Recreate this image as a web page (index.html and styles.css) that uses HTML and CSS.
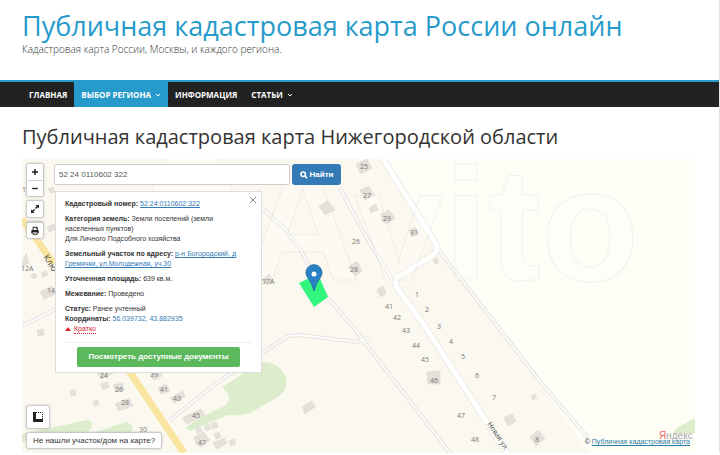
FILE: index.html
```html
<!DOCTYPE html>
<html lang="ru">
<head>
<meta charset="utf-8">
<meta name="viewport" content="width=device-width, initial-scale=1">
<title>Публичная кадастровая карта России онлайн</title>
<link rel="stylesheet" href="styles.css">
</head>
<body>
<header class="site-header">
  <h1 class="site-title"><a href="#">Публичная кадастровая карта России онлайн</a></h1>
  <p class="site-tagline">Кадастровая карта России, Москвы, и каждого региона.</p>
</header>
<nav class="main-nav">
  <a class="nav-link" href="#">ГЛАВНАЯ</a>
  <a class="nav-link nav-link-active" href="#">ВЫБОР РЕГИОНА
    <svg class="chevron" viewBox="0 0 6 4" aria-hidden="true"><path d="M1 1l2 2 2-2"/></svg></a>
  <a class="nav-link" href="#">ИНФОРМАЦИЯ</a>
  <a class="nav-link" href="#">СТАТЬИ
    <svg class="chevron" viewBox="0 0 6 4" aria-hidden="true"><path d="M1 1l2 2 2-2"/></svg></a>
</nav>
<main class="content">
  <h2 class="page-title">Публичная кадастровая карта Нижегородской области</h2>
  <section class="map">
    <svg class="map-canvas" viewBox="22 159 673 294" preserveAspectRatio="xMinYMin slice" aria-label="Карта">
      <rect class="field" x="22" y="159" width="2000" height="1000"/>
      <path class="land" d="M22 159H384L440 252 482 306 538 383 590 453H22z"/>
      <g class="green">
        <path d="M222 387L262 362Q280 362 286 378Q289 391 276 398L250 413Q240 416 228 415L190 431 185 428 200 418 226 405Q232 397 226 391z"/>
        <path d="M22 434L88 420Q96 423 88 432L22 442z"/>
        <path d="M90 434L126 422Q138 426 128 436L118 442H90z"/>
        <path d="M680 426L695 418V433H672z"/>
      </g>
      <g class="yellow-road">
        <path d="M22 219L54 264M127 368L184 453"/>
      </g>
      <g class="lane-edge">
        <path d="M22 326L56 309M262 208L284 228 302 252 318 286 352 326 450 453M262 353L288 336 300 335 358 342 370 337M262 353L218 382 170 420"/>
        <path d="M340 188L365 235 392 279"/>
        <path d="M440 252L482 306 538 379 588 438"/>
      </g>
      <g class="lane-fill">
        <path d="M22 326L56 309M262 208L284 228 302 252 318 286 352 326 450 453M262 353L288 336 300 335 358 342 370 337M262 353L218 382 170 420"/>
        <path d="M340 188L365 235 392 279"/>
        <path d="M440 252L482 306 538 379 588 438"/>
      </g>
      <path class="street-edge" d="M382 157L436 244Q440 251 430 257L398 277Q393 281 398 289L424 325 508 455"/>
      <path class="street" d="M382 157L436 244Q440 251 430 257L398 277Q393 281 398 289L424 325 508 455"/>
      <g class="watermark" aria-hidden="true">
        <circle cx="192" cy="190" r="40"/><circle cx="206" cy="260" r="27"/>
        <text x="245" y="280">Avito</text>
      </g>
      <g class="house">
        <path d="M356 164l11-5 5 9-11 6zM360 190l9-4 5 9-9 5zM369 208l7-4 2 6-7 3zM381 214l8-4 6 8-8 6-5-3zM409 231l6-4 4 6-7 4zM319 206l9-5 7 9-10 5zM348 267l9-6 5 10-7 5zM377 290l6-4 3 8-5 3z"/>
        <path d="M427 372l13-1v13h-12zM504 418l8-4 4 7-8 5zM530 437l8-7 7 8-9 8zM302 407l10-6 3 6-10 7z"/>
        <path d="M97 373l14-6 3 6-13 6zM101 384l6-2 2 5-6 3zM113 385l9-2 2 7-8 2zM115 404l14-6 4 8-14 5zM150 375l9-5 3 6-8 4zM158 388l8-4 4 7-9 3zM170 398l13-7 2 6-11 6zM182 418l19-9 4 6-18 9zM194 437l9-5 7 8-9 7-5-3zM213 443l11-5 3 5-10 6zM195 428l5-2 2 5-5 2zM204 426l5-2 2 5-5 2zM211 424l5-2 2 5-5 2zM214 434l5-2 2 5-5 2zM229 441l5-2 2 5-5 2zM37 330l6-1 1 6-6 1zM70 391l5-1 1 5-5 1zM93 401l5-1 1 5-5 1z"/>
        <path d="M48 189l5-2 2 5-5 1zM47 227l7-3 2 5-7 3zM40 292l12-6 4 8-12 5zM31 275l4-2 2 4-4 2zM41 273l5-2 2 4-5 2zM22 263l4-10 3 10-7 4zM27 166l6-2 3 5-7 3zM262 280l7-6 4 7-5 4zM433 260l4-2 2 4-4 2zM531 396l4-2 2 4-4 2z"/>
      </g>
      <g class="map-label">
        <text x="360" y="169">25</text><text x="363" y="198">27</text><text x="383" y="221">29</text><text x="410" y="235">31</text>
        <text x="352" y="244">26</text><text x="350" y="272">28</text><text x="262" y="284">37А</text><text x="415" y="297">1</text>
        <text x="385" y="309">41</text><text x="393" y="320">42</text><text x="402" y="333">43</text><text x="412" y="348">44</text>
        <text x="421" y="362">45</text><text x="430" y="383">46</text><text x="457" y="418">47</text><text x="471" y="442">48</text>
        <text x="425" y="312">2</text><text x="437" y="329">3</text><text x="449" y="344">4</text><text x="461" y="359">5</text>
        <text x="475" y="378">6</text><text x="492" y="400">7</text><text x="535" y="442">8</text>
        <text x="100" y="378">24</text><text x="115" y="392">26</text><text x="121" y="405">28</text><text x="139" y="432">30</text>
        <text x="150" y="377">39</text><text x="160" y="392">41</text><text x="173" y="401">43</text><text x="192" y="418">45</text><text x="198" y="445">47</text>
        <text x="21" y="271">12А</text><text x="47" y="293">14</text><text x="22" y="192">15</text>
      </g>
      <text class="street-name" transform="translate(487 424) rotate(56)">Новая ул.</text>
      <text class="street-name street-name-main" transform="translate(43 257) rotate(57)">Ключевая</text>
      <path class="parcel" d="M299 283L318 274 328 297 314 307z"/>
      <path class="pin" d="M314 291Q312 283 308 278A8 8 0 1 1 320 278Q316 283 314 291z"/>
      <circle class="pin-hole" cx="314" cy="274" r="2.5"/>
      <text class="yandex" x="659" y="439"><tspan class="yandex-first">Я</tspan>ндекс</text>
    </svg>

    <div class="map-overlay">
      <div class="tools">
        <div class="tool-group">
          <button class="tool" type="button" aria-label="Приблизить"><svg viewBox="0 0 16 16"><path class="tool-stroke" d="M5 8h6M8 5v6"/></svg></button>
          <button class="tool" type="button" aria-label="Отдалить"><svg viewBox="0 0 16 16"><path class="tool-stroke" d="M5 8h6"/></svg></button>
        </div>
        <button class="tool tool-single" type="button" aria-label="На весь экран"><svg viewBox="0 0 16 16"><path d="M8.500 4H12v3.500l-1.200-1.200-1.800 1.800-1.100-1.100 1.800-1.800zM7.500 12H4V8.500l1.200 1.200L7 7.900 8.100 9 6.300 10.800z"/></svg></button>
        <button class="tool tool-single" type="button" aria-label="Печать"><svg viewBox="0 0 16 16"><path d="M5.500 4H10l1 1v2.500H5.500zM4 8.500q0-1 1-1h6q1 0 1 1V11h-1.500V9.500h-5V11H4zM5.500 10h5v2.500h-5z"/><path class="paper" d="M6.500 5h2.500v1h1v1.500H6.500zM6.500 10.500h3v1h-3z"/></svg></button>
      </div>
      <div class="panel">
        <form class="search">
          <input class="search-input" type="text" aria-label="Кадастровый номер" value="52 24 0110602 322">
          <button class="search-button" type="button"><svg viewBox="0 0 10 10" aria-hidden="true"><circle cx="4" cy="4" r="2.800"/><path d="M6.200 6.200L9 9"/></svg>Найти</button>
        </form>
        <article class="card">
          <button class="card-close" type="button" aria-label="Закрыть"><svg viewBox="0 0 8 8"><path d="M1 1l6 6M7 1L1 7"/></svg></button>
          <p><b>Кадастровый номер:</b> <a class="underlined" href="#">52:24:0110602:322</a></p>
          <p><b>Категория земель:</b> Земли поселений (земли<br>населенных пунктов)<br>Для Личного Подсобного хозяйства</p>
          <p><b>Земельный участок по адресу:</b> <a class="underlined" href="#">р-н Богородский, д<br>Гремячки, ул.Молодежная, уч.30</a></p>
          <p><b>Уточненная площадь:</b> 639 кв.м.</p>
          <p><b>Межевание:</b> Проведено</p>
          <p><b>Статус:</b> Ранее учтенный<br><b>Координаты:</b> <a href="#">56.039732, 43.882935</a><br><span class="brief"><svg viewBox="0 0 6 4" aria-hidden="true"><path d="M0 4L3 0l3 4z"/></svg><a href="#">Кратко</a></span></p>
          <div class="card-action"><button class="docs-button" type="button">Посмотреть доступные документы</button></div>
        </article>
      </div>
      <div class="bottom-tools">
        <button class="tool tool-ruler" type="button" aria-label="Измерить"><svg viewBox="0 0 12 12"><path d="M1 1h3v7h7v3H1z"/><path class="ruler-dash" d="M4 1.500h6.500V8"/></svg></button>
        <button class="help-button" type="button">Не нашли участок/дом на карте?</button>
      </div>
      <p class="copyright">© <a href="#">Публичная кадастровая карта</a></p>
    </div>
  </section>
</main>
</body>
</html>
```
FILE: styles.css
```css
* { box-sizing: border-box; }
body {
  margin: 0;
  background: #fff;
  border-right: 1px solid #e4e4e4;
  font-family: "Open Sans", sans-serif;
  color: #222;
}
a { color: #337ab7; text-decoration: none; }
p, h1, h2 { margin: 0; }
button { font: inherit; padding: 0; border: 0; cursor: pointer; }

.site-header { padding: 8px 22px 25px; }
.site-title { font-size: 27px; line-height: 36px; font-weight: 400; white-space: nowrap; }
.site-title a { color: #269bcb; }
.site-tagline { font-size: 10px; line-height: 11px; font-weight: 300; color: #333; }

.main-nav {
  display: flex;
  border-top: 2px solid #269bcb;
  background: #222;
  padding-left: 22px;
}
.nav-link {
  display: flex;
  align-items: center;
  gap: 4px;
  padding: 0 7px;
  line-height: 25px;
  font-size: 8px;
  font-weight: 700;
  color: #fff;
}
.nav-link-active { background: #269bcb; }
.chevron { width: 6px; height: 4px; fill: none; stroke: #fff; }

.content { padding: 16px 24px 0 22px; }
.page-title { font-size: 20px; line-height: 28px; font-weight: 400; color: #333; margin-bottom: 8px; white-space: nowrap; }

.map { display: grid; min-height: 294px; overflow: hidden; }
.map > * { grid-area: 1 / 1; }
.map-canvas { width: 100%; height: 100%; min-height: 294px; }
.field { fill: #fefdf6; }
.land { fill: #fbf8ef; }
.green path { fill: #dcedcb; }
.yellow-road { fill: none; stroke: #fae5a0; stroke-width: 7; }
.lane-edge { fill: none; stroke: #e4e2e2; stroke-width: 4; }
.lane-fill { fill: none; stroke: #fdfcfa; stroke-width: 2; }
.street-edge { fill: none; stroke: #edebe8; stroke-width: 7; }
.street { fill: none; stroke: #fff; stroke-width: 5; }
.house { fill: #e5e1da; stroke: #d9d5ce; stroke-width: 0.5; }
.map-label { font: 7px "Open Sans", sans-serif; fill: #777; }
.street-name { font: 7px "Open Sans", sans-serif; fill: #444; }
.street-name-main { font-size: 9px; }
.parcel { fill: #31f57c; }
.watermark { fill: #fff; fill-opacity: 0.25; stroke: #999; stroke-opacity: 0.12; }
.watermark text { font: bold 160px "Liberation Sans", sans-serif; }
.pin { fill: #2a80c4; stroke: #276fa8; }
.pin-hole { fill: #fff; }
.yandex { font: 10px "Liberation Sans", sans-serif; fill: #aaa; }
.yandex-first { fill: #e66; }

.map-overlay {
  position: relative;
  display: grid;
  grid-template: 1fr auto / 27px 1fr auto;
  padding: 5px;
  font-family: "Liberation Sans", sans-serif;
}
.tools { display: flex; flex-direction: column; gap: 5px; width: 16px; }
.tool, .tool-group, .help-button {
  background: #fff;
  border-radius: 2px;
  color: #222;
}
.tool-group, .tool-single, .tool-ruler, .help-button { box-shadow: 0 0 2px 1px #bbb; }
.tool { display: block; width: 16px; height: 16px; }
.tool svg { display: block; width: 100%; height: 100%; fill: #222; }
.tool-stroke { stroke: #222; stroke-width: 1.5; }
.tool .paper { fill: #fff; }
.tool + .tool { border-top: 1px solid #ccc; }
.tool-ruler { width: 22px; height: 22px; padding: 5px; }
.ruler-dash { fill: none; stroke: #222; stroke-dasharray: 1 1; }

.search { display: flex; gap: 2px; margin-bottom: 6px; }
.search-input {
  width: 236px;
  height: 21px;
  border: 1px solid #ccc;
  border-radius: 2px;
  padding: 0 4px;
  background: #fff;
  font: 8px "Liberation Sans", sans-serif;
  color: #555;
}
.search-button {
  display: flex;
  align-items: center;
  justify-content: center;
  gap: 2px;
  width: 49px;
  border-radius: 3px;
  background: #337ab7;
  color: #fff;
  font-size: 8px;
  font-weight: 700;
}
.search-button svg { width: 8px; height: 8px; fill: none; stroke: #fff; stroke-width: 2; }

.card {
  position: relative;
  display: flex;
  flex-direction: column;
  gap: 5px;
  width: 207px;
  margin-left: 1px;
  padding: 7px 9px 5px;
  background: #fff;
  border: 1px solid #ddd;
  font-size: 7px;
  line-height: 10px;
  color: #333;
}
.underlined { text-decoration: underline; }
.card-close { position: absolute; top: 4px; right: 4px; width: 8px; height: 8px; background: none; }
.card-close svg { display: block; fill: none; stroke: #888; }
.brief { display: inline-flex; align-items: center; gap: 3px; }
.brief svg { width: 6px; height: 4px; fill: #d22; }
.brief a { color: #d23; border-bottom: 1px dotted #d23; line-height: 8px; }
.card-action { border-top: 1px solid #eee; padding: 4px 12px 0; margin-top: 3px; }
.docs-button {
  display: block;
  width: 100%;
  height: 20px;
  border-radius: 2px;
  background: #5cb85c;
  color: #fff;
  font-size: 8px;
  font-weight: 700;
}

.bottom-tools { grid-column: 1 / 3; display: flex; flex-direction: column; align-items: flex-start; gap: 5px; }
.help-button { height: 15px; padding: 0 6px; font-size: 8px; color: #333; }
.copyright { align-self: end; font-size: 7px; line-height: 12px; }
.copyright a { text-decoration: underline; color: #2a7da8; }
```
